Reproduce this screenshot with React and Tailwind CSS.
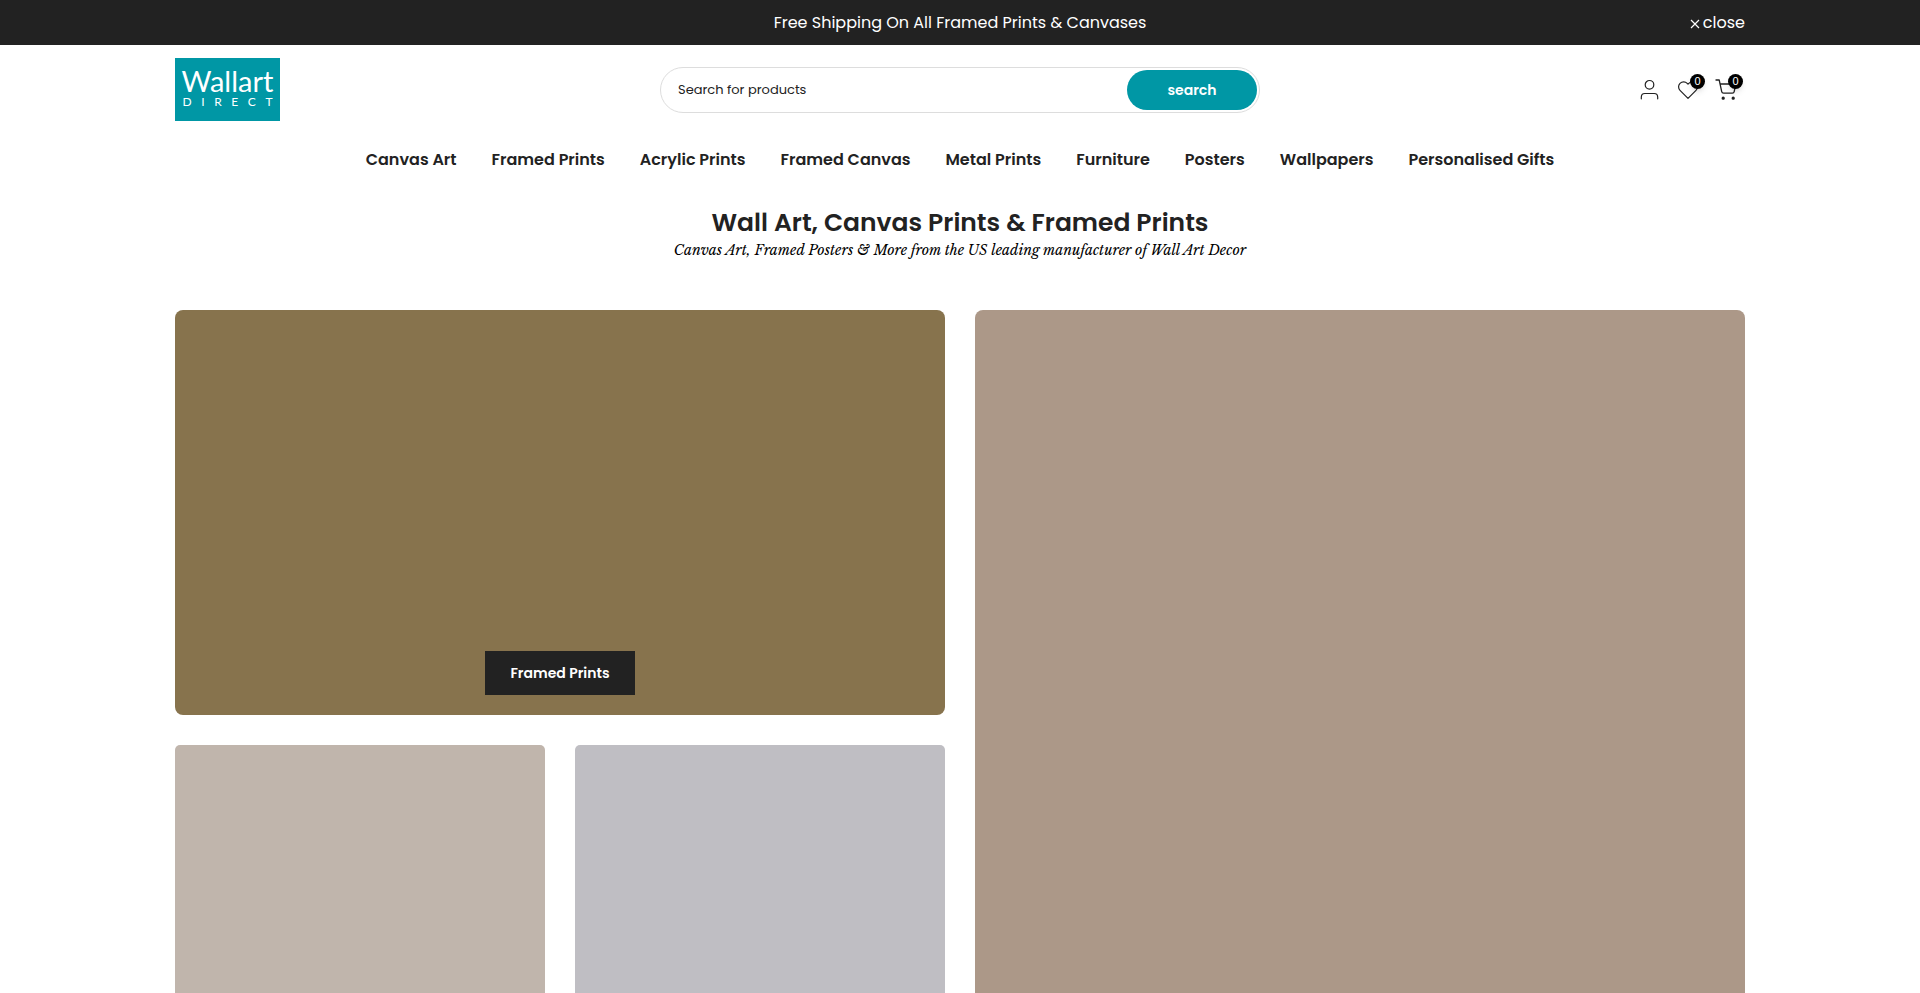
import React from 'react';

const navLinks = [
  'Canvas Art',
  'Framed Prints',
  'Acrylic Prints',
  'Framed Canvas',
  'Metal Prints',
  'Furniture',
  'Posters',
  'Wallpapers',
  'Personalised Gifts',
];

const Logo = () => (
  <a href="#" aria-label="Wallart Direct" className="mb-px flex h-[63px] w-[105px] flex-col items-center bg-[#0097a5] pt-2 font-['Lato',sans-serif] text-white">
    <span className="text-[29px] leading-[30px]">Wallart</span>
    <span className="flex w-[90px] justify-between text-xs leading-3">
      {'DIRECT'.split('').map((letter) => (
        <span key={letter}>{letter}</span>
      ))}
    </span>
  </a>
);

const UserIcon = () => (
  <svg viewBox="0 0 22 22" className="size-[22px]" fill="none" stroke="#222" strokeWidth="1.2" strokeLinecap="round">
    <circle cx="10.500" cy="5.800" r="4.300" />
    <path d="M2.300 19.800v-1.600c0-2.200 1.300-3.700 3.500-3.700h9.400c2.200 0 3.500 1.500 3.500 3.700v1.600" />
  </svg>
);

const HeartIcon = () => (
  <svg viewBox="0 0 22 22" className="size-[22px]" fill="none" stroke="#222" strokeWidth="1.200" strokeLinejoin="round">
    <path d="M11 19.300 3 11.300C1.100 9.400 1.100 6.200 3 4.300c2-2 5.300-2 7.200 0l.8.9.8-.9c1.900-2 5.200-2 7.200 0 1.900 1.900 1.900 5.100 0 7z" />
  </svg>
);

const CartIcon = () => (
  <svg viewBox="0 0 22 22" className="size-[22px]" fill="none" stroke="#222" strokeWidth="1.300" strokeLinecap="round" strokeLinejoin="round">
    <path d="M1 1h3.200l2.500 11.600c.2 1.100.9 1.600 1.900 1.600h8.800c1 0 1.600-.5 1.800-1.500L20.800 5H5.100" />
    <circle cx="8.200" cy="19.200" r="1" fill="#222" />
    <circle cx="18.200" cy="19.200" r="1" fill="#222" />
  </svg>
);

const CountBadge = ({ count }) => (
  <span className="absolute -top-[5px] -right-1.5 flex size-[15px] items-center justify-center rounded-full bg-black font-['Liberation_Sans',sans-serif] text-[11px] leading-none text-white shadow-md">
    {count}
  </span>
);

const Announcement = () => (
  <div className="bg-[#222] text-base text-white">
    <div className="mx-auto grid h-[45px] max-w-[1600px] grid-cols-[1fr_auto_1fr] items-center px-[15px]">
      <p className="col-start-2">Free Shipping On All Framed Prints &amp; Canvases</p>
      <button type="button" className="flex items-center gap-1 justify-self-end">
        <svg viewBox="0 0 8 8" className="mt-0.5 size-2 overflow-visible" stroke="currentColor" strokeWidth="1.200">
          <path d="M0 0l8 8M8 0L0 8" />
        </svg>
        close
      </button>
    </div>
  </div>
);

const SearchForm = () => (
  <form className="flex h-[46px] w-[600px] items-center rounded-full border border-[#ddd] p-0.5" onSubmit={(e) => e.preventDefault()}>
    <input
      type="text"
      aria-label="Search for products"
      placeholder="Search for products"
      className="min-w-0 flex-1 px-[15px] text-[13px] text-[#222] outline-none placeholder:text-[#222]"
    />
    <button type="submit" className="h-10 w-[130px] rounded-full bg-[#0097a5] text-sm font-semibold text-white">
      search
    </button>
  </form>
);

const Header = () => (
  <header className="mx-auto max-w-[1600px] px-[15px]">
    <div className="grid h-[90px] grid-cols-[1fr_auto_1fr] items-center">
      <Logo />
      <SearchForm />
      <div className="flex items-center gap-4 justify-self-end pr-2">
        <a href="#" aria-label="Account"><UserIcon /></a>
        <a href="#" aria-label="Wishlist" className="relative">
          <HeartIcon />
          <CountBadge count={0} />
        </a>
        <a href="#" aria-label="Cart" className="relative">
          <CartIcon />
          <CountBadge count={0} />
        </a>
      </div>
    </div>
    <nav className="flex h-[50px] items-center justify-center gap-[35px] text-base font-semibold">
      {navLinks.map((label) => (
        <a key={label} href="#">{label}</a>
      ))}
    </nav>
  </header>
);

export default function App() {
  return (
    <div className="min-h-screen bg-white font-['Poppins','Inter',sans-serif] text-[#222]">
      <Announcement />
      <Header />
      <main className="mx-auto max-w-[1600px] px-[15px]">
        <div className="pt-[21px] text-center">
          <h1 className="text-[25px] leading-[34px] font-semibold">Wall Art, Canvas Prints &amp; Framed Prints</h1>
          <p className="font-['Libre_Baskerville','Liberation_Serif',serif] text-sm leading-5 text-black italic">
            Canvas Art, Framed Posters &amp; More from the US leading manufacturer of Wall Art Decor
          </p>
        </div>
        <div className="mt-[50px] grid grid-cols-2 gap-[30px]">
          <div className="grid grid-cols-2 gap-[30px]">
            <section className="col-span-2 flex h-[405px] items-end justify-center rounded-lg bg-[#87734d] pb-5">
              <a href="#" className="flex h-11 w-[150px] items-center justify-center bg-[#222] text-sm font-semibold text-white">
                Framed Prints
              </a>
            </section>
            <section className="h-[405px] rounded-[5px] bg-[#c0b5ac]" />
            <section className="h-[405px] rounded-[5px] bg-[#bfbec3]" />
          </div>
          <section className="rounded-lg bg-[#ac9888]" />
        </div>
      </main>
    </div>
  );
}
